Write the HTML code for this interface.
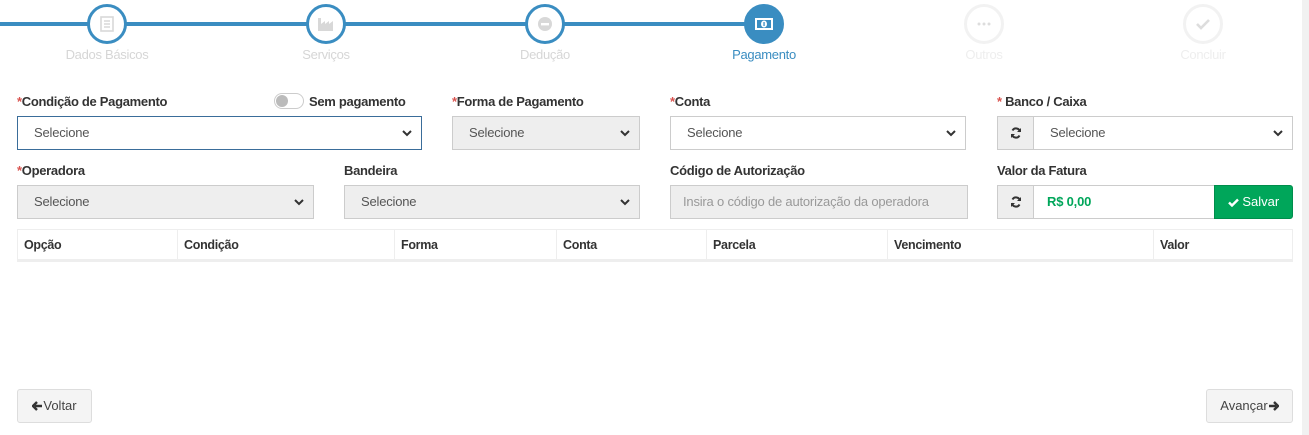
<!DOCTYPE html>
<html><head><meta charset="utf-8"><style>
*{box-sizing:border-box;margin:0;padding:0}
body{width:1309px;height:435px;background:#fff;font-family:"Liberation Sans",sans-serif;font-size:13px;color:#333;position:relative;overflow:hidden}
.a{position:absolute}
.line{position:absolute;left:0;top:22px;width:764px;height:4px;background:#3a8dc1}
.c{position:absolute;top:4px;width:40px;height:40px;border-radius:50%;border:3px solid #3a8dc1;background:#fff;display:flex;align-items:center;justify-content:center}
.c.f{border-color:#f2f2f2}
.c.act{background:#3a8dc1}
.st{position:absolute;top:47px;width:160px;text-align:center;font-size:13px;color:#d6d6d6;letter-spacing:-0.3px}
.lab{position:absolute;font-weight:bold;font-size:13px;color:#333;letter-spacing:-0.3px}
.lab i{color:#d9534f;font-style:normal}
.in{position:absolute;height:34px;border:1px solid #ccc;background:#fff;color:#555;padding-left:16px;line-height:32px;font-size:13px;letter-spacing:-0.2px}
.dis{background:#eee}
.chev{position:absolute;right:9px;top:13px}
.addon{position:absolute;width:37px;height:34px;border:1px solid #ccc;background:#eee;display:flex;align-items:center;justify-content:center}
table{position:absolute;left:17px;top:229px;width:1276px;border-collapse:collapse}
td{border:1px solid #eee;border-bottom:3px solid #eee;height:31px;font-weight:bold;padding-left:6px;font-size:12.5px;letter-spacing:-0.3px}
.btn{position:absolute;height:34px;border:1px solid #ddd;border-radius:3px;background:#f4f4f4;color:#444;line-height:32px;font-size:13px;text-align:center}
.sb{position:absolute;right:0;top:0;width:7px;height:435px;background:#f1f1f1}
</style></head><body>
<div class="line"></div>
<div class="c" style="left:87px"><svg width="16" height="16" viewBox="0 0 16 16"><rect x="2" y="1" width="12" height="14" fill="none" stroke="#d8d8d8" stroke-width="1.6"/><path d="M5 5h6M5 8h6M5 11h6" stroke="#d8d8d8" stroke-width="1.4"/></svg></div>
<div class="c" style="left:306px"><svg width="18" height="16" viewBox="0 0 18 16"><path d="M1 15V2h3v6l4-3v3l4-3v3l4-3v10z" fill="#d8d8d8"/></svg></div>
<div class="c" style="left:525px"><svg width="16" height="16"><circle cx="8" cy="8" r="7" fill="#d8d8d8"/><rect x="4" y="7" width="8" height="2.4" fill="#fff"/></svg></div>
<div class="c act" style="left:744px"><svg width="18" height="12"><rect x="0" y="0" width="18" height="12" fill="#fff"/><rect x="2" y="2" width="14" height="8" fill="#3a8dc1"/><ellipse cx="9" cy="6" rx="3" ry="3.5" fill="#fff"/><rect x="8.4" y="4" width="1.3" height="4" fill="#3a8dc1"/></svg></div>
<div class="c f" style="left:964px"><svg width="14" height="4"><circle cx="2" cy="2" r="1.5" fill="#ddd"/><circle cx="7" cy="2" r="1.5" fill="#ddd"/><circle cx="12" cy="2" r="1.5" fill="#ddd"/></svg></div>
<div class="c f" style="left:1183px"><svg width="14" height="12"><path d="M1 6l4 4 8-8" stroke="#ddd" stroke-width="2.6" fill="none"/></svg></div>
<div class="st" style="left:27px">Dados Básicos</div>
<div class="st" style="left:246px">Serviços</div>
<div class="st" style="left:465px">Dedução</div>
<div class="st" style="left:684px;color:#3a8dc1">Pagamento</div>
<div class="st" style="left:904px;color:#eee">Outros</div>
<div class="st" style="left:1123px;color:#eee">Concluir</div>

<div class="lab" style="left:17px;top:94px"><i>*</i>Condição de Pagamento</div>
<div class="a" style="left:274px;top:93px;width:30px;height:16px;border-radius:8px;border:1px solid #ccc;background:#fff"><div style="position:absolute;left:1px;top:1px;width:12px;height:12px;border-radius:50%;background:#bbb"></div></div>
<div class="lab" style="left:309px;top:94px">Sem pagamento</div>
<div class="lab" style="left:452px;top:94px"><i>*</i>Forma de Pagamento</div>
<div class="lab" style="left:670px;top:94px"><i>*</i>Conta</div>
<div class="lab" style="left:997px;top:94px"><i>*</i> Banco / Caixa</div>

<div class="in" style="left:17px;top:116px;width:405px;border-color:#3a6d9a">Selecione<svg class="chev" width="10" height="7"><path d="M1 1l4 4 4-4" stroke="#333" stroke-width="2" fill="none"/></svg></div>
<div class="in dis" style="left:452px;top:116px;width:188px">Selecione<svg class="chev" width="10" height="7"><path d="M1 1l4 4 4-4" stroke="#333" stroke-width="2" fill="none"/></svg></div>
<div class="in" style="left:670px;top:116px;width:296px">Selecione<svg class="chev" width="10" height="7"><path d="M1 1l4 4 4-4" stroke="#333" stroke-width="2" fill="none"/></svg></div>
<div class="addon" style="left:997px;top:116px"><svg width="12" height="12" viewBox="0 0 12 12"><path d="M10 5A4 4 0 0 0 2.5 3.5M2 7a4 4 0 0 0 7.5 1.5" stroke="#333" stroke-width="2" fill="none"/><path d="M11 1v4H7zM1 11V7h4z" fill="#333"/></svg></div>
<div class="in" style="left:1033px;top:116px;width:260px">Selecione<svg class="chev" width="10" height="7"><path d="M1 1l4 4 4-4" stroke="#333" stroke-width="2" fill="none"/></svg></div>

<div class="lab" style="left:17px;top:163px"><i>*</i>Operadora</div>
<div class="lab" style="left:344px;top:163px">Bandeira</div>
<div class="lab" style="left:670px;top:163px">Código de Autorização</div>
<div class="lab" style="left:997px;top:163px">Valor da Fatura</div>

<div class="in dis" style="left:17px;top:185px;width:297px">Selecione<svg class="chev" width="10" height="7"><path d="M1 1l4 4 4-4" stroke="#333" stroke-width="2" fill="none"/></svg></div>
<div class="in dis" style="left:344px;top:185px;width:296px">Selecione<svg class="chev" width="10" height="7"><path d="M1 1l4 4 4-4" stroke="#333" stroke-width="2" fill="none"/></svg></div>
<div class="in dis" style="left:670px;top:185px;width:298px;padding-left:12px;color:#999">Insira o código de autorização da operadora</div>
<div class="addon" style="left:997px;top:185px"><svg width="12" height="12" viewBox="0 0 12 12"><path d="M10 5A4 4 0 0 0 2.5 3.5M2 7a4 4 0 0 0 7.5 1.5" stroke="#333" stroke-width="2" fill="none"/><path d="M11 1v4H7zM1 11V7h4z" fill="#333"/></svg></div>
<div class="in" style="left:1033px;top:185px;width:182px;padding-left:13px;color:#00a65a;font-weight:bold">R$ 0,00</div>
<div class="a" style="left:1214px;top:185px;width:79px;height:34px;background:#00a65a;border:1px solid #008d4c;border-radius:0 3px 3px 0;color:#fff;line-height:32px;text-align:center;font-size:13px"><svg width="11" height="9" style="vertical-align:-1px"><path d="M1 4.5l3 3 6-6" stroke="#fff" stroke-width="2.4" fill="none"/></svg> Salvar</div>

<table><tr><td style="width:160px">Opção</td><td style="width:217px">Condição</td><td style="width:162px">Forma</td><td style="width:150px">Conta</td><td style="width:181px">Parcela</td><td style="width:266px">Vencimento</td><td>Valor</td></tr></table>

<div class="btn" style="left:17px;top:389px;width:75px"><svg width="11" height="10" style="vertical-align:-1px"><path d="M10 5H3M5 1L1 5l4 4" stroke="#333" stroke-width="2.4" fill="none"/></svg>Voltar</div>
<div class="btn" style="left:1206px;top:389px;width:87px">Avançar<svg width="11" height="10" style="vertical-align:-1px"><path d="M1 5h7M6 1l4 4-4 4" stroke="#333" stroke-width="2.4" fill="none"/></svg></div>
<div class="sb"></div>
</body></html>
